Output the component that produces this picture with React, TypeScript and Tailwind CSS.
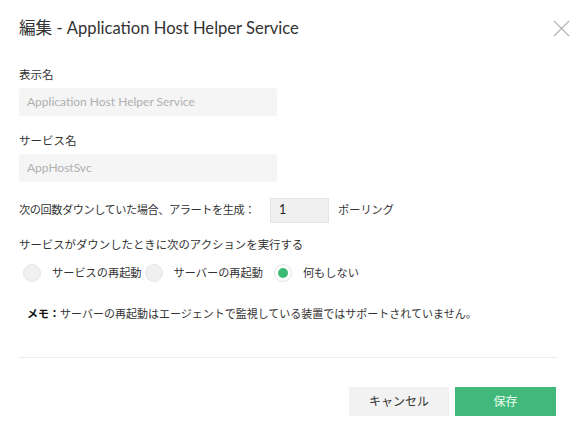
import React from "react";

const font = { fontFamily: 'Lato, "Noto Sans CJK JP", sans-serif' };

function Radio({ checked, label, className }: { checked?: boolean; label: string; className?: string }) {
  return (
    <label className={`flex items-center ${className ?? ""}`}>
      {checked ? (
        <span className="flex h-[18px] w-[18px] items-center justify-center rounded-full border border-[#e2e2e2] bg-white">
          <span className="h-[10px] w-[10px] rounded-full bg-[#3dba76]" />
        </span>
      ) : (
        <span className="h-[18px] w-[18px] rounded-full border border-[#e6e6e6] bg-[#f0f0f0]" />
      )}
      <span className="ml-[11px] text-[11.2px] leading-[16px] text-[#333]">{label}</span>
    </label>
  );
}

export default function App() {
  return (
    <div style={font} className="h-[437px] w-[580px] bg-white pl-[19px] pr-[23px] pt-[18px]">
      <div className="flex items-center justify-between">
        <h1 className="text-[16.6px] leading-[20px] text-[#333]">編集 - Application Host Helper Service</h1>
        <button className="mr-[-13px] flex h-[18px] w-[18px] items-center justify-center">
          <svg width="17" height="17" viewBox="0 0 17 17" fill="none">
            <path d="M1 1L16 16M16 1L1 16" stroke="#b5b5b5" strokeWidth="1.2" />
          </svg>
        </button>
      </div>

      <div className="mt-[29px] text-[11.5px] leading-[16px] text-[#333]">表示名</div>
      <div className="mt-[5px] flex h-[28px] w-[258px] items-center rounded-[2px] bg-[#f5f5f5] pl-[8px] text-[12px] text-[#b0b0b0]">
        Application Host Helper Service
      </div>

      <div className="mt-[17px] text-[11.5px] leading-[16px] text-[#333]">サービス名</div>
      <div className="mt-[5px] flex h-[28px] w-[258px] items-center rounded-[2px] bg-[#f5f5f5] pl-[8px] text-[12px] text-[#b0b0b0]">
        AppHostSvc
      </div>

      <div className="mt-[16px] flex h-[25px] items-center text-[11.2px] text-[#333]">
        <span className="w-[251px] whitespace-nowrap tracking-[-0.45px]">
          次の回数ダウンしていた場合、アラートを生成：
        </span>
        <div className="flex h-[25px] w-[59px] items-center border border-[#e4e4e4] bg-[#f0f0f0] pl-[8px] text-[12.5px] text-[#222]">
          1
        </div>
        <span className="ml-[9px]">ポーリング</span>
      </div>

      <div className="mt-[14px] text-[11.4px] leading-[16px] text-[#333]">サービスがダウンしたときに次のアクションを実行する</div>

      <div className="mt-[11px] flex items-center pl-[4px]">
        <Radio label="サービスの再起動" />
        <Radio label="サーバーの再起動" className="ml-[3px]" />
        <Radio label="何もしない" checked className="ml-[11px]" />
      </div>

      <div className="mt-[24px] whitespace-nowrap pl-[8px] text-[11px] leading-[16px] text-[#333]">
        <span className="font-bold text-[#111]">メモ：</span>
        サーバーの再起動はエージェントで監視している装置ではサポートされていません。
      </div>

      <div className="mt-[35px] h-px bg-[#ececec]" />

      <div className="mt-[29px] flex justify-end gap-[6px] pr-[1px]">
        <button className="h-[29px] w-[100px] bg-[#f2f2f2] text-[12px] text-[#333]">キャンセル</button>
        <button className="h-[29px] w-[101px] bg-[#42b97a] text-[12px] text-[#eafff2]">保存</button>
      </div>
    </div>
  );
}
